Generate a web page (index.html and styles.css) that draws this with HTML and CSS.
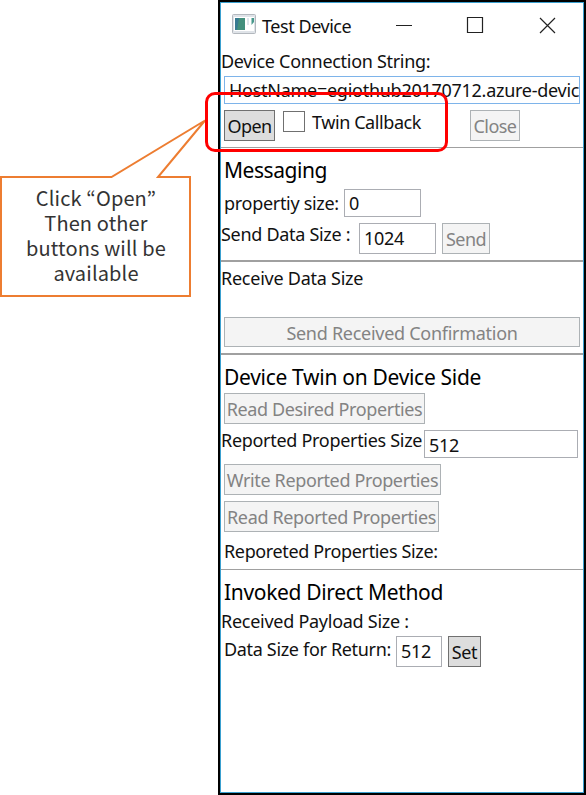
FILE: index.html
```html
<!DOCTYPE html>
<html lang="en">
<head>
<meta charset="utf-8">
<title>Test Device</title>
<link rel="stylesheet" href="styles.css">
</head>
<body>
<main class="window">
  <header class="titlebar">
    <svg class="app-icon" width="24" height="20" viewBox="0 0 24 20"><rect x=".5" y=".5" width="23" height="19" rx="1" fill="#dfe3e8" stroke="#b3b8be"/><rect x="2" y="3" width="20" height="14" fill="#fff"/><rect x="3" y="4" width="10" height="12" fill="#438f7c"/><path d="M3 4h4l-2 12H3z" fill="#377a91"/><path d="M19.500 4H22v4l-2.500 3z" fill="#47988b"/><path d="M15 4h2v7h-2z" fill="#dfe6ec"/></svg>
    <span class="text t-title">Test Device</span>
    <svg class="controls" width="160" height="18" viewBox="0 0 160 18" fill="none" stroke="#222" stroke-width="1.200"><path d="M0 9.500h16M71.500 1.500h15v15h-15zM144 2l15 15M159 2l-15 15"/></svg>
  </header>
  <div class="text t-conn">Device Connection String:</div>
  <div class="field f-conn"><span class="text t-host">HostName=egiothub20170712.azure-devic</span></div>
  <div class="row open-row">
    <button class="btn active b-open"><span class="text t-open">Open</span></button>
    <span class="checkbox"></span>
    <span class="text t-twin">Twin Callback</span>
    <button class="btn b-close"><span class="text t-close">Close</span></button>
  </div>
  <section class="messaging">
    <h2 class="text t-msg">Messaging</h2>
    <div class="row prop-row"><span class="text t-prop">propertiy size:</span><div class="field f-prop"><span class="text">0</span></div></div>
    <div class="row send-row"><span class="text t-sds">Send Data Size :</span><div class="field f-send"><span class="text t-1024">1024</span></div><button class="btn b-send"><span class="text t-send">Send</span></button></div>
  </section>
  <section class="receive">
    <div class="text t-recv">Receive Data Size</div>
    <button class="btn b-confirm"><span class="text t-confirm">Send Received Confirmation</span></button>
  </section>
  <section class="twin">
    <h2 class="text t-dtwin">Device Twin on Device Side</h2>
    <button class="btn b-desired"><span class="text t-desired">Read Desired Properties</span></button>
    <div class="row rep-row"><span class="text t-rep">Reported Properties Size</span><div class="field f-rep"><span class="text">512</span></div></div>
    <button class="btn b-write"><span class="text t-write">Write Reported Properties</span></button>
    <button class="btn b-read"><span class="text t-read">Read Reported Properties</span></button>
    <div class="text t-rps">Reporeted Properties Size:</div>
  </section>
  <section class="method">
    <h2 class="text t-inv">Invoked Direct Method</h2>
    <div class="text t-pay">Received Payload Size :</div>
    <div class="row ret-row"><span class="text t-ret">Data Size for Return:</span><div class="field f-ret"><span class="text">512</span></div><button class="btn active b-set"><span class="text t-set">Set</span></button></div>
  </section>
</main>
<svg class="pointer" width="210" height="210" viewBox="0 90 210 210"><path d="M1 177H111.500L205 120.500L158 177H190V296H1Z" fill="#fff" stroke="#ed7d31" stroke-width="2"/></svg>
<div class="callout">Click “Open”<br>Then other<br>buttons will be<br>available</div>
<div class="highlight"></div>
</body>
</html>
```
FILE: styles.css
```css
* { box-sizing: border-box; }
body { margin: 0; width: 586px; height: 795px; background: #fff; overflow: hidden; position: relative; }
.window { width: 368px; height: 795px; margin-left: 218px; border: 2px solid #000; outline: 1px solid #3aa0d0; outline-offset: -3px; padding: 1px; display: flex; flex-direction: column; align-items: flex-start; font-family: "Noto Sans", sans-serif; color: #111; }
.text { font-size: 18px; line-height: 24px; letter-spacing: -.3px; white-space: nowrap; font-weight: 400; margin: 0; display: block; flex: none; }
h2.text { font-size: 21px; line-height: 28px; color: #000; margin-left: 3px; }
.row { display: flex; align-items: flex-start; width: 100%; flex: none; }

.titlebar { width: 100%; height: 46px; display: flex; align-items: flex-start; flex: none; }
.app-icon { margin: 11px 0 0 11px; }
.t-title { margin: 11px 0 0 6px; width: 134px; letter-spacing: -.45px; }
.controls { margin-top: 13px; }

.field { height: 28px; border: 1px solid #abadb3; background: #fff; overflow: hidden; flex: none; padding-left: 4px; }
.btn { height: 31px; margin: 0; padding: 0; border: 1px solid #adb2b5; background: #f4f4f4; color: #838383; font-family: inherit; display: flex; justify-content: center; align-items: flex-start; flex: none; }
.btn .text { margin-top: 3px; letter-spacing: -.37px; }
.active { background: #ddd; border-color: #707070; color: #111; }

.f-conn { width: 356px; margin: 3px 0 6px 3px; padding-top: 1px; border-color: #7eb4ea; }
.t-host { letter-spacing: -.27px; }
.open-row { height: 37px; padding-left: 3px; }
.b-open { width: 51px; }
.btn .t-open, .btn .t-close, .btn .t-send { letter-spacing: -.55px; }
.checkbox { width: 22px; height: 21px; border: 1px solid #707070; margin: 1px 7px 0 8px; }
.t-twin { width: 158px; letter-spacing: -.42px; }
.b-close { width: 50px; }

section { width: 100%; border-top: 1px solid #a0a0a0; display: flex; flex-direction: column; align-items: flex-start; flex: none; }
.messaging { height: 113px; padding-top: 8px; }
.t-msg { letter-spacing: -.45px; }
.prop-row { padding-left: 3px; margin-top: 5px; height: 34px; }
.t-prop { width: 120px; margin-top: 2px; }
.f-prop { width: 77px; padding-top: 1px; }
.t-sds { width: 138px; margin-top: -1px; }
.f-send { width: 77px; height: 31px; margin-right: 6px; padding-top: 2px; }
.b-send { width: 48px; }

.receive { border-top-width: 2px; height: 93px; padding-top: 4px; }
.t-recv { letter-spacing: -.25px; }
.b-confirm { width: 356px; height: 30px; margin: 27px 0 0 3px; }
.btn .t-confirm { letter-spacing: -.28px; }

.twin { border-top-width: 2px; height: 216px; padding-top: 8px; }
.b-desired { width: 201px; margin: 2px 0 0 3px; }
.rep-row { margin-top: 6px; height: 34px; }
.t-rep { width: 203px; margin-top: -2px; }
.f-rep { width: 154px; padding-top: 2px; }
.b-write { width: 217px; margin-left: 3px; }
.b-read { width: 215px; margin: 6px 0 0 3px; }
.t-rps { margin: 7px 0 0 3px; letter-spacing: -.36px; }

.method { padding-top: 8px; }
.t-inv { letter-spacing: -.33px; }
.t-pay { margin-top: 3px; letter-spacing: -.27px; }
.ret-row { margin-top: 3px; padding-left: 3px; }
.t-ret { width: 172px; margin-top: 1px; letter-spacing: -.33px; }
.f-ret { width: 46px; height: 31px; margin-right: 6px; padding-top: 2px; }
.b-set { width: 33px; }

.pointer { position: absolute; left: 0; top: 90px; }
.callout { position: absolute; left: 0; top: 185px; width: 192px; text-align: center; font: 20px/25px "Noto Sans CJK JP", sans-serif; letter-spacing: .13px; color: #333; }
.highlight { position: absolute; left: 205px; top: 92px; width: 243px; height: 60px; border: 3px solid #f00; border-radius: 10px; }
```
